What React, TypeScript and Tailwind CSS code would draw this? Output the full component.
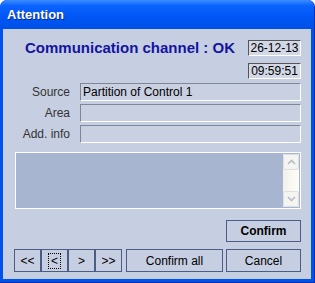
const labelCls = 'w-[65px] pr-[10px] text-right text-[12px] leading-[17px] text-[#333]'
const fieldCls =
  'flex-1 h-[18px] border border-t-[#7f8796] border-l-[#7f8796] border-b-white border-r-white bg-[#c9d0e2] px-[2px] text-[12px] leading-[16px] text-black'

function NavButton({ label, focused }: { label: string; focused?: boolean }) {
  return (
    <button className="w-[27px] h-[23px] border border-[#4c5c86] bg-[#c6cee2] flex items-center justify-center text-[12px] text-black">
      {focused ? (
        <span className="border border-dotted border-black px-[2px] leading-[14px]">{label}</span>
      ) : (
        label
      )}
    </button>
  )
}

function Chevron({ up }: { up?: boolean }) {
  return (
    <svg width="9" height="6" viewBox="0 0 9 6">
      <path
        d={up ? 'M1 5 L4.5 1.5 L8 5' : 'M1 1 L4.5 4.5 L8 1'}
        fill="none"
        stroke="#b9bcc4"
        strokeWidth="1.6"
      />
    </svg>
  )
}

export default function App() {
  return (
    <div className="w-[315px] h-[283px] flex flex-col rounded-t-[7px] overflow-hidden bg-[#0052ec] border-r border-b border-[#0031b0] font-['Liberation_Sans',Arial,sans-serif]">
      {/* Title bar */}
      <div className="h-[29px] shrink-0 flex items-center px-[7px] bg-[linear-gradient(180deg,#3b8dff_0%,#0a62ff_20%,#0056f4_60%,#0050e8_100%)]">
        <span className="text-white font-bold text-[13px] [text-shadow:1px_1px_0_#0a2a8a]">Attention</span>
      </div>

      {/* Body */}
      <div className="flex-1 ml-[3px] mr-[3px] mb-[3px] bg-[#c6cee2] pl-[12px] pr-[10px] flex flex-col">
        {/* Header */}
        <div className="mt-[11px] flex items-start justify-between">
          <div className="ml-[10px] h-[16px] flex items-center text-[15px] font-bold text-[#1414a0]">
            Communication channel : OK
          </div>
          <div className="flex flex-col gap-[7px]">
            <div className="w-[53px] h-[16px] border border-t-[#555] border-l-[#555] border-b-white border-r-white bg-[#d2d8e6] text-center text-[12px] leading-[14px] text-black">
              26-12-13
            </div>
            <div className="w-[53px] h-[16px] border border-t-[#555] border-l-[#555] border-b-white border-r-white bg-[#d2d8e6] text-center text-[12px] leading-[14px] text-black">
              09:59:51
            </div>
          </div>
        </div>

        {/* Fields */}
        <div className="mt-[4px] flex flex-col gap-[3px]">
          <div className="flex items-center">
            <div className={labelCls}>Source</div>
            <div className={fieldCls}>Partition of Control 1</div>
          </div>
          <div className="flex items-center">
            <div className={labelCls}>Area</div>
            <div className={fieldCls}></div>
          </div>
          <div className="flex items-center">
            <div className={labelCls}>Add. info</div>
            <div className={fieldCls}></div>
          </div>
        </div>

        {/* Message area */}
        <div className="mt-[9px] h-[57px] border border-white bg-[#a8b5d1] flex justify-end p-[1px]">
          <div className="w-[16px] flex flex-col justify-between bg-gradient-to-r from-[#f3f1e8] to-[#fdfdfa]">
            <div className="h-[16px] rounded-[2px] border border-[#dcdfe6] bg-[#f4f4f0] flex items-center justify-center">
              <Chevron up />
            </div>
            <div className="h-[16px] rounded-[2px] border border-[#dcdfe6] bg-[#f4f4f0] flex items-center justify-center">
              <Chevron />
            </div>
          </div>
        </div>

        {/* Confirm */}
        <div className="mt-[11px] flex justify-end">
          <button className="w-[75px] h-[22px] border border-[#4c5c86] bg-[#c6cee2] text-[12px] font-bold text-black">
            Confirm
          </button>
        </div>

        {/* Bottom row */}
        <div className="mt-[7px] -ml-[1px] flex items-center">
          <NavButton label="<<" />
          <NavButton label="<" focused />
          <NavButton label=">" />
          <NavButton label=">>" />
          <button className="ml-[4px] w-[97px] h-[23px] border border-[#4c5c86] bg-[#c6cee2] text-[12px] text-black">
            Confirm all
          </button>
          <button className="ml-auto w-[75px] h-[23px] border border-[#4c5c86] bg-[#c6cee2] text-[12px] text-black">
            Cancel
          </button>
        </div>
      </div>
    </div>
  )
}
